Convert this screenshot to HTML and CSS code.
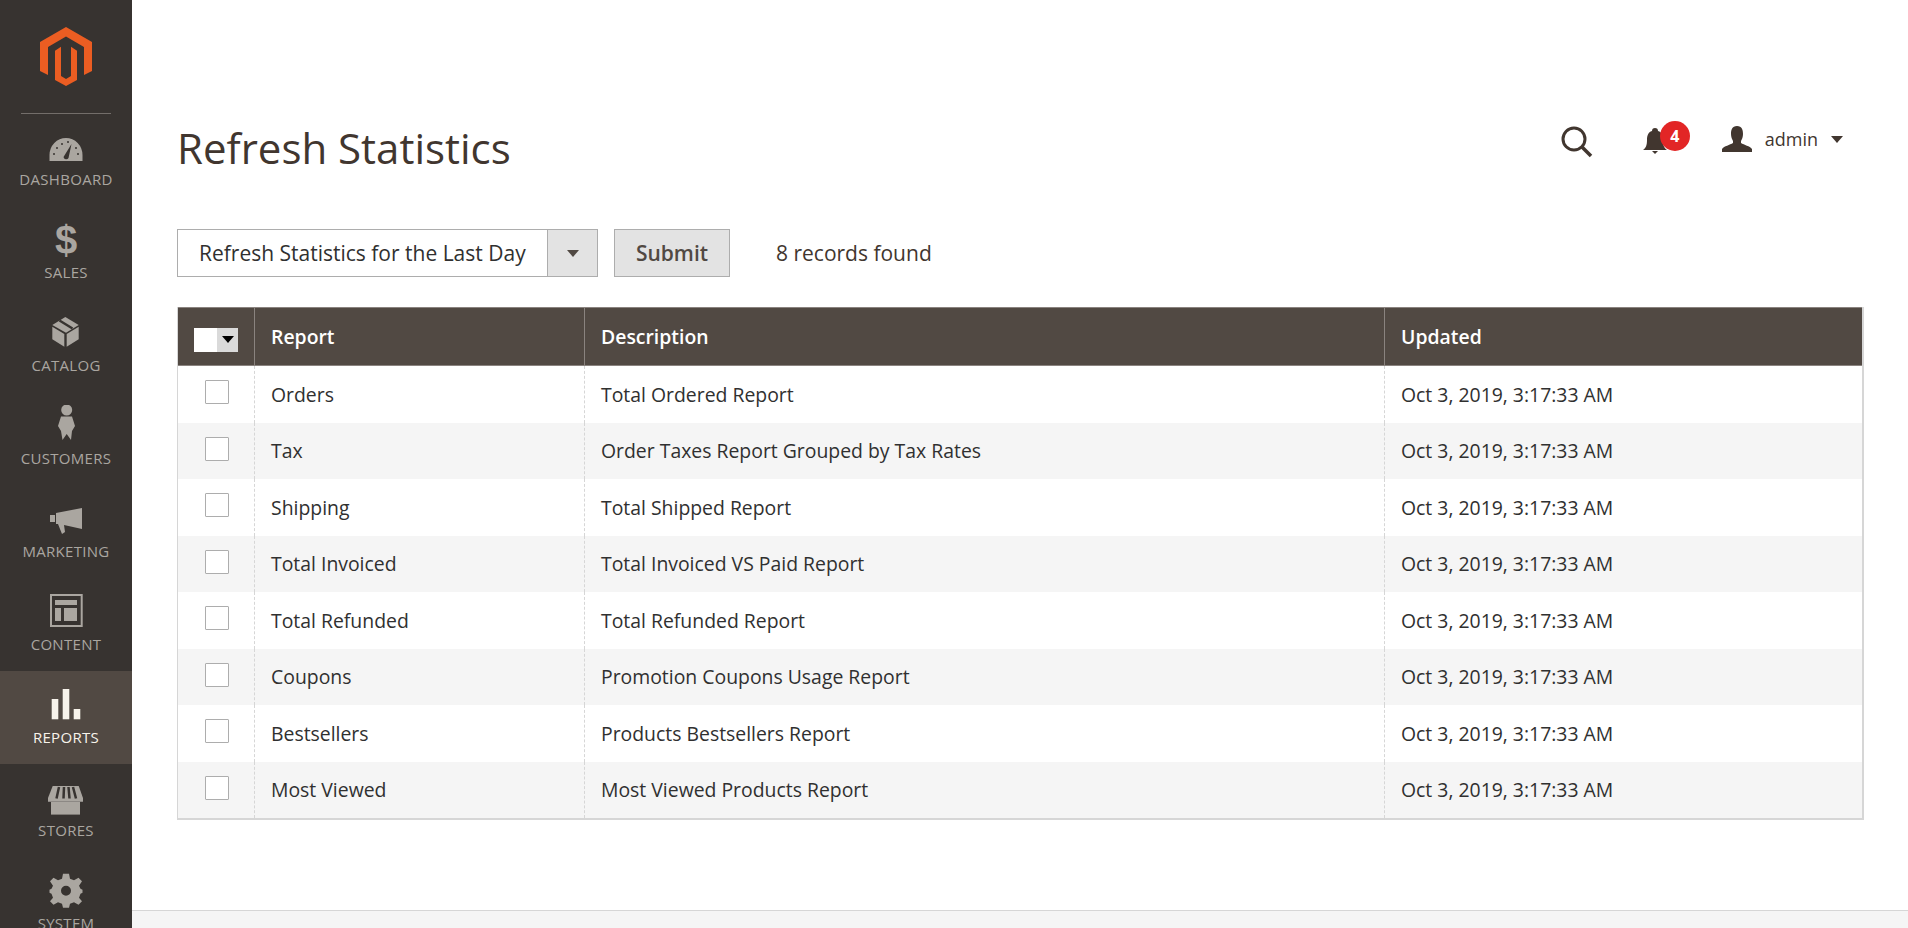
FILE: index.html
```html
<!DOCTYPE html>
<html lang="en">
<head>
    <meta charset="UTF-8">
    <meta name="viewport" content="width=device-width, initial-scale=1.0">
    <title>Refresh Statistics</title>
    <link rel="stylesheet" href="styles.css">
</head>
<body>
    <aside class="sidebar">
        <div class="logo">
            <svg width="52" height="59" viewBox="40 27 52 59">
                <path fill="#eb5d22" d="M66 27 92 42V71L84 75V47L66 36.5 48 47V75L40 71V42Z"/>
                <path fill="#eb5d22" d="M55 50.7 61 46.7V76L66 79 71 76V46.7L77 50.7V80L66 86 55 80Z"/>
            </svg>
        </div>
        <nav class="nav">
            <a class="nav-item">
                <svg class="nav-icon" viewBox="0 0 44 44">
                    <path d="M5.500 35V29A16.500 17 0 0 1 38.500 29V35Z"/>
                    <path class="cut" d="M19.500 31 27.500 18 24.500 32A2.700 2.700 0 0 1 19.500 31Z"/>
                    <circle class="cut" cx="10" cy="28" r="1"/><circle class="cut" cx="13" cy="22" r="1"/>
                    <circle class="cut" cx="18" cy="18" r="1"/><circle class="cut" cx="24" cy="16" r="1"/>
                    <circle class="cut" cx="34" cy="28" r="1"/><circle class="cut" cx="32" cy="22" r="1"/>
                </svg>
                <span>Dashboard</span>
            </a>
            <a class="nav-item">
                <span class="nav-icon dollar">$</span>
                <span>Sales</span>
            </a>
            <a class="nav-item">
                <svg class="nav-icon" viewBox="0 0 44 44">
                    <path d="M21.300 5 34.700 13 22 20.700 8.300 13Z"/>
                    <path class="cut-line" d="M15.500 8.500 28.500 16.500"/>
                    <path d="M8.300 14.700 20.300 22V34.700L8.300 27.300Z"/>
                    <path d="M22.700 22 34.700 14.700V27.300L22.700 34.700Z"/>
                </svg>
                <span>Catalog</span>
            </a>
            <a class="nav-item">
                <svg class="nav-icon" viewBox="0 0 44 44">
                    <circle cx="22.700" cy="5" r="5.500"/>
                    <path d="M17 11.500H28L31 21 28 26 27 35 22.700 29 18.500 35 17 26 14 21Z"/>
                </svg>
                <span>Customers</span>
            </a>
            <a class="nav-item">
                <svg class="nav-icon" viewBox="0 0 44 44">
                    <path d="M6 17H11V24H6Z"/>
                    <path d="M12 15 38 10V31L20 27 21 34 18 36 14 26H12Z"/>
                </svg>
                <span>Marketing</span>
            </a>
            <a class="nav-item">
                <svg class="nav-icon" viewBox="0 0 44 44">
                    <path fill-rule="evenodd" d="M6 3H38.700V36H6ZM8 5V34H36.700V5Z"/>
                    <path d="M11 9H33V14H11Z"/>
                    <path d="M11 17H17V30H11Z"/>
                    <path d="M20 17H33V30H20Z"/>
                </svg>
                <span>Content</span>
            </a>
            <a class="nav-item active">
                <svg class="nav-icon" viewBox="0 0 44 44">
                    <path d="M7.700 15H14.300V35.300H7.700Z"/>
                    <path d="M18.700 5H25.300V35.300H18.700Z"/>
                    <path d="M29.700 25H36.300V35.300H29.700Z"/>
                </svg>
                <span>Reports</span>
            </a>
            <a class="nav-item">
                <svg class="nav-icon" viewBox="0 0 44 44">
                    <path d="M8.700 9H34.700L39 21V24.700H4V21Z"/>
                    <path class="cut-line" d="M15 10 12.500 21.500M20 10 19.500 21.500M24.500 10 25.500 21.500M29 10 32 21.500"/>
                    <path d="M7 25H36V37.600H7Z"/>
                </svg>
                <span>Stores</span>
            </a>
            <a class="nav-item">
                <svg class="nav-icon" viewBox="0 0 44 44">
                    <path transform="translate(0 -1.300)" fill-rule="evenodd" d="M19 5H25L26 10 30 11.500 34.500 9 38 12.500 35 17 36.500 20 38.500 21V24L36.500 25 35 29 38 32.500 34.500 36 30 33.500 26 35 25 39H19L18 35 14 33.500 9.500 36 6 32.500 9 29 7.500 25 5.500 24V21L7.500 20 9 17 6 12.500 9.500 9 14 11.500 18 10ZM22 17A5 5 0 1 0 22 27 5 5 0 1 0 22 17Z"/>
                </svg>
                <span>System</span>
            </a>
        </nav>
    </aside>

    <main class="main">
        <header class="page-header">
            <h1>Refresh Statistics</h1>
            <div class="actions">
                <svg class="search-icon" width="34" height="34" viewBox="0 0 34 34">
                    <circle cx="14" cy="13" r="11" fill="none" stroke="#41362f" stroke-width="3"/>
                    <path d="M22 21 31 30" stroke="#41362f" stroke-width="3.500"/>
                </svg>
                <div class="bell">
                    <svg width="24" height="26" viewBox="0 0 24 26">
                        <path fill="#41362f" d="M12 0C14 0 15 1 15 3 19 4 20 8 20 12 20 17 21 20 24 22H0C3 20 4 17 4 12 4 8 5 4 9 3 9 1 10 0 12 0Z"/>
                        <path fill="#41362f" d="M9 23H15L12 26Z"/>
                    </svg>
                    <span class="badge">4</span>
                </div>
                <div class="user">
                    <svg width="30" height="26" viewBox="0 0 30 26">
                        <path fill="#41362f" d="M15 0C20 0 21 4 21 8 21 11 20 13 19 15V17C22 19 28 20 30 23V26H0V23C2 20 8 19 11 17V15C10 13 9 11 9 8 9 4 10 0 15 0Z"/>
                    </svg>
                    <span class="user-name">admin</span>
                    <span class="caret"></span>
                </div>
            </div>
        </header>

        <div class="toolbar">
            <div class="select">
                <span class="select-text">Refresh Statistics for the Last Day</span>
                <span class="select-addon"><span class="caret"></span></span>
            </div>
            <button class="submit">Submit</button>
            <span class="records">8 records found</span>
        </div>

        <table class="grid">
            <thead>
                <tr>
                    <th class="col-check">
                        <span class="mass-select"><span class="mass-box"></span><span class="mass-arrow"></span></span>
                    </th>
                    <th class="col-report">Report</th>
                    <th class="col-desc">Description</th>
                    <th>Updated</th>
                </tr>
            </thead>
            <tbody>
                <tr><td class="cell-check"><span class="checkbox"></span></td><td>Orders</td><td>Total Ordered Report</td><td>Oct 3, 2019, 3:17:33 AM</td></tr>
                <tr><td class="cell-check"><span class="checkbox"></span></td><td>Tax</td><td>Order Taxes Report Grouped by Tax Rates</td><td>Oct 3, 2019, 3:17:33 AM</td></tr>
                <tr><td class="cell-check"><span class="checkbox"></span></td><td>Shipping</td><td>Total Shipped Report</td><td>Oct 3, 2019, 3:17:33 AM</td></tr>
                <tr><td class="cell-check"><span class="checkbox"></span></td><td>Total Invoiced</td><td>Total Invoiced VS Paid Report</td><td>Oct 3, 2019, 3:17:33 AM</td></tr>
                <tr><td class="cell-check"><span class="checkbox"></span></td><td>Total Refunded</td><td>Total Refunded Report</td><td>Oct 3, 2019, 3:17:33 AM</td></tr>
                <tr><td class="cell-check"><span class="checkbox"></span></td><td>Coupons</td><td>Promotion Coupons Usage Report</td><td>Oct 3, 2019, 3:17:33 AM</td></tr>
                <tr><td class="cell-check"><span class="checkbox"></span></td><td>Bestsellers</td><td>Products Bestsellers Report</td><td>Oct 3, 2019, 3:17:33 AM</td></tr>
                <tr><td class="cell-check"><span class="checkbox"></span></td><td>Most Viewed</td><td>Most Viewed Products Report</td><td>Oct 3, 2019, 3:17:33 AM</td></tr>
            </tbody>
        </table>

        <footer class="page-footer"></footer>
    </main>
</body>
</html>
```

FILE: styles.css
```css
* {
    box-sizing: border-box;
}

html, body {
    height: 100%;
}

body {
    margin: 0;
    display: flex;
    height: 928px;
    overflow: hidden;
    background: #fff;
    font-family: 'Open Sans', sans-serif;
    color: #303030;
}

/* sidebar */
.sidebar {
    width: 132px;
    flex-shrink: 0;
    background: #373330;
    overflow: hidden;
}

.logo {
    height: 113px;
    padding-top: 27px;
    display: flex;
    justify-content: center;
}

.nav {
    display: flex;
    flex-direction: column;
    position: relative;
}

.nav::before {
    content: '';
    height: 1px;
    margin: 0 21px -1px;
    background: #736e6a;
}

.nav-item {
    height: 93px;
    flex-shrink: 0;
    display: flex;
    flex-direction: column;
    align-items: center;
    padding-top: 13px;
    font-size: 15px;
    line-height: 20px;
    letter-spacing: 0.3px;
    text-transform: uppercase;
    color: #aaa6a0;
}

.nav-item.active {
    background: #514943;
    color: #f7f3eb;
}

.nav-icon {
    width: 44px;
    height: 44px;
    margin-bottom: -1px;
    fill: #aaa6a0;
}

.nav-item.active .nav-icon {
    fill: #f7f3eb;
}

.nav-icon .cut {
    fill: #373330;
}

.nav-icon .cut-line {
    fill: none;
    stroke: #373330;
    stroke-width: 2.500;
}

.dollar {
    display: block;
    font-family: 'Liberation Sans', sans-serif;
    font-weight: 700;
    font-size: 40px;
    line-height: 43px;
    text-align: center;
    letter-spacing: 0;
}

/* main */
.main {
    flex: 1;
    min-width: 0;
    display: flex;
    flex-direction: column;
}

.page-header {
    height: 229px;
    padding: 121px 45px 0 45px;
    display: flex;
    justify-content: space-between;
    align-items: flex-start;
}

h1 {
    margin: 0;
    font-size: 42px;
    font-weight: 400;
    line-height: 54px;
    color: #41362f;
}

.actions {
    display: flex;
    align-items: center;
    height: 36px;
}

.search-icon {
    margin-top: 8px;
    margin-right: 49px;
}

.bell {
    position: relative;
    display: flex;
    width: 24px;
    height: 26px;
    margin-top: 3px;
    margin-right: 55px;
}

.badge {
    position: absolute;
    left: 17px;
    top: -7px;
    width: 30px;
    height: 30px;
    border-radius: 50%;
    background: #e22626;
    color: #fff;
    font-size: 16px;
    font-weight: 700;
    line-height: 30px;
    text-align: center;
}

.user {
    display: flex;
    align-items: center;
    padding-right: 20px;
}

.user-name {
    margin: 0 13px;
    font-size: 18px;
    color: #41362f;
}

.caret {
    display: block;
    width: 0;
    height: 0;
    border-style: solid;
    border-width: 7px 6px 0 6px;
    border-color: #41362f transparent transparent transparent;
}

.toolbar {
    display: flex;
    align-items: center;
    padding-left: 45px;
    height: 48px;
    margin-bottom: 30px;
}

.select {
    width: 421px;
    height: 48px;
    display: flex;
    border: 1px solid #adadad;
    background: #fff;
}

.select-text {
    flex: 1;
    padding-left: 21px;
    font-size: 21px;
    line-height: 46px;
    color: #303030;
}

.select-addon {
    width: 50px;
    display: flex;
    align-items: center;
    justify-content: center;
    background: #e3e3e3;
    border-left: 1px solid #adadad;
}

.select-addon .caret {
    border-color: #514943 transparent transparent transparent;
}

.submit {
    width: 116px;
    height: 48px;
    margin-left: 16px;
    padding: 0;
    border: 1px solid #adadad;
    background: #e3e3e3;
    font-family: inherit;
    font-size: 21px;
    font-weight: 600;
    color: #514943;
}

.records {
    margin-left: 46px;
    font-size: 21px;
    color: #41362f;
}

/* grid */
.grid {
    width: 1687px;
    margin-left: 45px;
    table-layout: fixed;
    border-collapse: separate;
    border-spacing: 0;
    font-size: 19.400px;
    border-right: 2px solid #d6d6d6;
    border-bottom: 2px solid #d6d6d6;
    border-left: 1px solid #d6d6d6;
}

.grid th {
    height: 59px;
    padding: 0 16px;
    background: #514943;
    border-top: 1px solid #8a837f;
    border-bottom: 1px solid #8a837f;
    border-left: 1px solid #8a837f;
    color: #fff;
    font-weight: 600;
    text-align: left;
}

.grid th:first-child {
    border-left: 0;
}

.grid th.col-check {
    width: 76px;
    padding: 0 0 0 16px;
}

.col-report {
    width: 330px;
}

.col-desc {
    width: 800px;
}

.grid td {
    height: 56.500px;
    padding: 0 16px;
    border-left: 1px dashed #d6d6d6;
    color: #303030;
}

.grid td:first-child {
    border-left: 0;
}

.grid tbody tr:nth-child(even) td {
    background: #f5f5f5;
}

.grid .cell-check {
    padding: 0 0 4px 27px;
}

.checkbox {
    display: block;
    width: 24px;
    height: 24px;
    border: 1px solid #adadad;
    border-radius: 1px;
    background: #fff;
}

.mass-select {
    display: flex;
    width: 44px;
    height: 24px;
    margin-top: 6px;
}

.mass-box {
    width: 23px;
    background: #fff;
}

.mass-arrow {
    width: 21px;
    display: flex;
    align-items: center;
    justify-content: center;
    background: #dadada;
}

.mass-arrow::before {
    content: '';
    border-style: solid;
    border-width: 7px 6px 0 6px;
    border-color: #000 transparent transparent transparent;
}

.page-footer {
    flex: 1;
    margin-top: 90px;
    background: #f5f5f5;
    border-top: 1px solid #d6d6d6;
}
```
